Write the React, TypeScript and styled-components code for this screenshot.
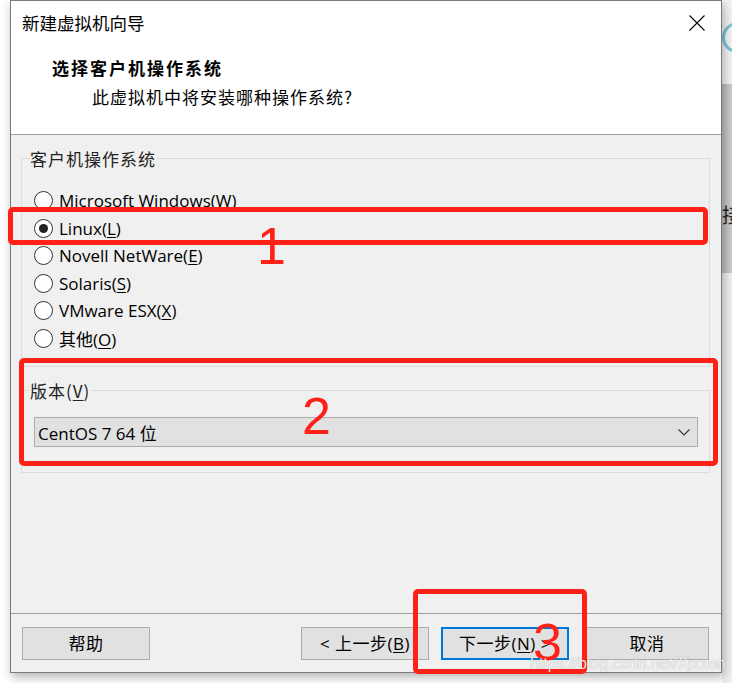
import styled, { createGlobalStyle } from 'styled-components'

const GlobalStyle = createGlobalStyle`
  html, body {
    margin: 0;
    padding: 0;
    background: #fff;
  }
  body {
    font-family: "Open Sans", "Noto Sans CJK SC", sans-serif;
    color: #000;
  }
`

const Page = styled.div`
  position: relative;
  display: flex;
  width: 732px;
  height: 683px;
  overflow: hidden;
  background: #fff;
`
const Window = styled.div`
  position: relative;
  z-index: 1;
  flex: none;
  display: flex;
  flex-direction: column;
  width: 712px;
  height: 673px;
  margin-left: 10px;
  box-sizing: border-box;
  border: 1px solid #7a7a7a;
  background: #f0f0f0;
  box-shadow: 2px 4px 10px rgba(0, 0, 0, 0.3);
`
const TitleBar = styled.div`
  display: flex;
  align-items: center;
  justify-content: space-between;
  height: 43px;
  padding: 0 16px 0 11px;
  background: #fff;
`
const WindowTitle = styled.span`
  font-family: "Noto Sans CJK SC", sans-serif;
  font-size: 17.5px;
  line-height: 24px;
`
const Header = styled.div`
  height: 91px;
  box-sizing: border-box;
  padding: 12px 0 0 41px;
  background: #fff;
  border-bottom: 1px solid #a0a0a0;
`
const HeaderTitle = styled.div`
  font-family: "Noto Sans CJK SC", serif;
  font-weight: 700;
  font-size: 17px;
  letter-spacing: 2px;
  line-height: 24px;
`
const HeaderSub = styled.div`
  margin: 5px 0 0 40px;
  font-family: "Noto Sans CJK SC", serif;
  font-size: 17px;
  letter-spacing: 1px;
  line-height: 24px;
`
const Body = styled.div`
  flex: 1;
  padding: 0 11px 0 10px;
  border-bottom: 1px solid #a0a0a0;
`
const GroupBox = styled.div`
  margin-top: 23px;
  border: 1px solid #dcdcdc;
`
const Legend = styled.div`
  width: fit-content;
  margin: -12px 0 0 7px;
  padding: 0 1px;
  background: #f0f0f0;
  color: #222;
  font-size: 17px;
  letter-spacing: 1px;
  line-height: 24px;
  font-family: "Noto Sans CJK SC", sans-serif;
`
const RadioList = styled.div`
  padding: 16px 0 14px 12px;
`
const RadioRow = styled.label`
  display: flex;
  align-items: center;
  height: 27.5px;
  font-size: 17px;
`
const Circle = styled.span<{ $checked?: boolean }>`
  display: flex;
  align-items: center;
  justify-content: center;
  width: 19px;
  height: 19px;
  box-sizing: border-box;
  margin-right: 6px;
  border: 1px solid #333;
  border-radius: 50%;
  background: #fff;

  &::after {
    content: '';
    display: ${p => (p.$checked ? 'block' : 'none')};
    width: 9px;
    height: 9px;
    border-radius: 50%;
    background: #222;
  }
`
const Key = styled.u`
  text-underline-offset: 2px;
  text-decoration-thickness: 1px;
`
const VersionBody = styled.div`
  padding: 14px 11px 25px 12px;
`
const Select = styled.div`
  display: flex;
  align-items: center;
  justify-content: space-between;
  height: 30px;
  box-sizing: border-box;
  padding: 0 7px 0 3px;
  border: 1px solid #adadad;
  background: #e1e1e1;
  font-size: 17px;
`
const Footer = styled.div`
  display: flex;
  height: 58px;
  box-sizing: border-box;
  padding: 13px 12px 0 11px;
`
const Button = styled.button<{ $width: number; $gap?: number; $primary?: boolean }>`
  width: ${p => p.$width}px;
  height: 33px;
  margin-left: ${p => p.$gap ?? 0}px;
  box-sizing: border-box;
  padding: 0;
  border: ${p => (p.$primary ? '2px solid #0078d7' : '1px solid #adadad')};
  background: #e1e1e1;
  color: #000;
  font-family: "Open Sans", "Noto Sans CJK SC", sans-serif;
  font-size: 17px;
  letter-spacing: 0.5px;
  line-height: 1;
`
const Spacer = styled.div`
  flex: 1;
`
const Backdrop = styled.div`
  flex: 1;
  display: flex;
  flex-direction: column;
  overflow: hidden;
  background: #f0f0f0;
`
const BackdropTop = styled.div`
  height: 84px;
  padding-top: 21px;
  box-sizing: border-box;
  background: #f4f4f4;
`
const BackdropBand = styled.div`
  height: 189px;
  padding-top: 119px;
  box-sizing: border-box;
  background: linear-gradient(90deg, #bdbdbd, #cecece);
  font-family: "Noto Sans CJK SC", sans-serif;
  font-size: 20px;
  line-height: 24px;
  color: #222;
  white-space: nowrap;
`
const RedBox = styled.div<{ $x: number; $y: number; $w: number; $h: number }>`
  position: absolute;
  z-index: 2;
  left: ${p => p.$x}px;
  top: ${p => p.$y}px;
  width: ${p => p.$w}px;
  height: ${p => p.$h}px;
  box-sizing: border-box;
  border: 5px solid #ff2117;
  border-radius: 5px;
`
const Digit = styled.div<{ $x: number; $y: number }>`
  position: absolute;
  z-index: 2;
  left: ${p => p.$x}px;
  top: ${p => p.$y}px;
  font-family: "Liberation Sans", sans-serif;
  font-size: 52px;
  line-height: 1;
  color: #ff2117;
`
const Watermark = styled.div`
  position: absolute;
  z-index: 3;
  left: 530px;
  top: 656px;
  font-family: "Liberation Sans", sans-serif;
  font-size: 16px;
  line-height: 1;
  color: rgba(255, 255, 255, 0.9);
  text-shadow: 0 0 1px rgba(0, 0, 0, 0.4);
  white-space: nowrap;
`

const systems = [
  { label: 'Microsoft Windows', key: 'W' },
  { label: 'Linux', key: 'L', checked: true },
  { label: 'Novell NetWare', key: 'E' },
  { label: 'Solaris', key: 'S' },
  { label: 'VMware ESX', key: 'X' },
  { label: '其他', key: 'O' },
]

const App = () => {
  return (
    <Page>
      <GlobalStyle />
      <Window>
        <TitleBar>
          <WindowTitle>新建虚拟机向导</WindowTitle>
          <svg width="16" height="16" viewBox="0 0 16 16">
            <path d="M0.5 0.5 L15.5 15.5 M15.5 0.5 L0.5 15.5" stroke="#000" strokeWidth="1.1" />
          </svg>
        </TitleBar>
        <Header>
          <HeaderTitle>选择客户机操作系统</HeaderTitle>
          <HeaderSub>此虚拟机中将安装哪种操作系统?</HeaderSub>
        </Header>
        <Body>
          <GroupBox>
            <Legend>客户机操作系统</Legend>
            <RadioList>
              {systems.map(s => (
                <RadioRow key={s.key}>
                  <Circle $checked={s.checked} />
                  <span>
                    {s.label}(<Key>{s.key}</Key>)
                  </span>
                </RadioRow>
              ))}
            </RadioList>
          </GroupBox>
          <GroupBox>
            <Legend>
              版本(<Key>V</Key>)
            </Legend>
            <VersionBody>
              <Select>
                <span>CentOS 7 64 位</span>
                <svg width="12" height="7" viewBox="0 0 12 7">
                  <path d="M0.5 0.5 L6 6 L11.5 0.5" fill="none" stroke="#333" strokeWidth="1.1" />
                </svg>
              </Select>
            </VersionBody>
          </GroupBox>
        </Body>
        <Footer>
          <Button $width={128}>帮助</Button>
          <Spacer />
          <Button $width={128}>
            &lt; 上一步(<Key>B</Key>)
          </Button>
          <Button $width={128} $gap={12} $primary>
            下一步(<Key>N</Key>) &gt;
          </Button>
          <Button $width={124} $gap={16}>
            取消
          </Button>
        </Footer>
      </Window>
      <Backdrop>
        <BackdropTop>
          <svg width="11" height="34" viewBox="0 0 11 34">
            <circle cx="15.5" cy="16.5" r="14" fill="none" stroke="#7cc3d8" strokeWidth="3" />
          </svg>
        </BackdropTop>
        <BackdropBand>接</BackdropBand>
      </Backdrop>

      <RedBox $x={8} $y={207} $w={700} $h={38} />
      <Digit $x={257} $y={220}>1</Digit>
      <RedBox $x={19} $y={358} $w={699} $h={108} />
      <Digit $x={302} $y={390}>2</Digit>
      <RedBox $x={413} $y={589} $w={174} $h={85} />
      <Digit $x={533} $y={616}>3</Digit>
      <Watermark>https://blog.csdn.net/Xjzzon</Watermark>
    </Page>
  )
}

export default App
